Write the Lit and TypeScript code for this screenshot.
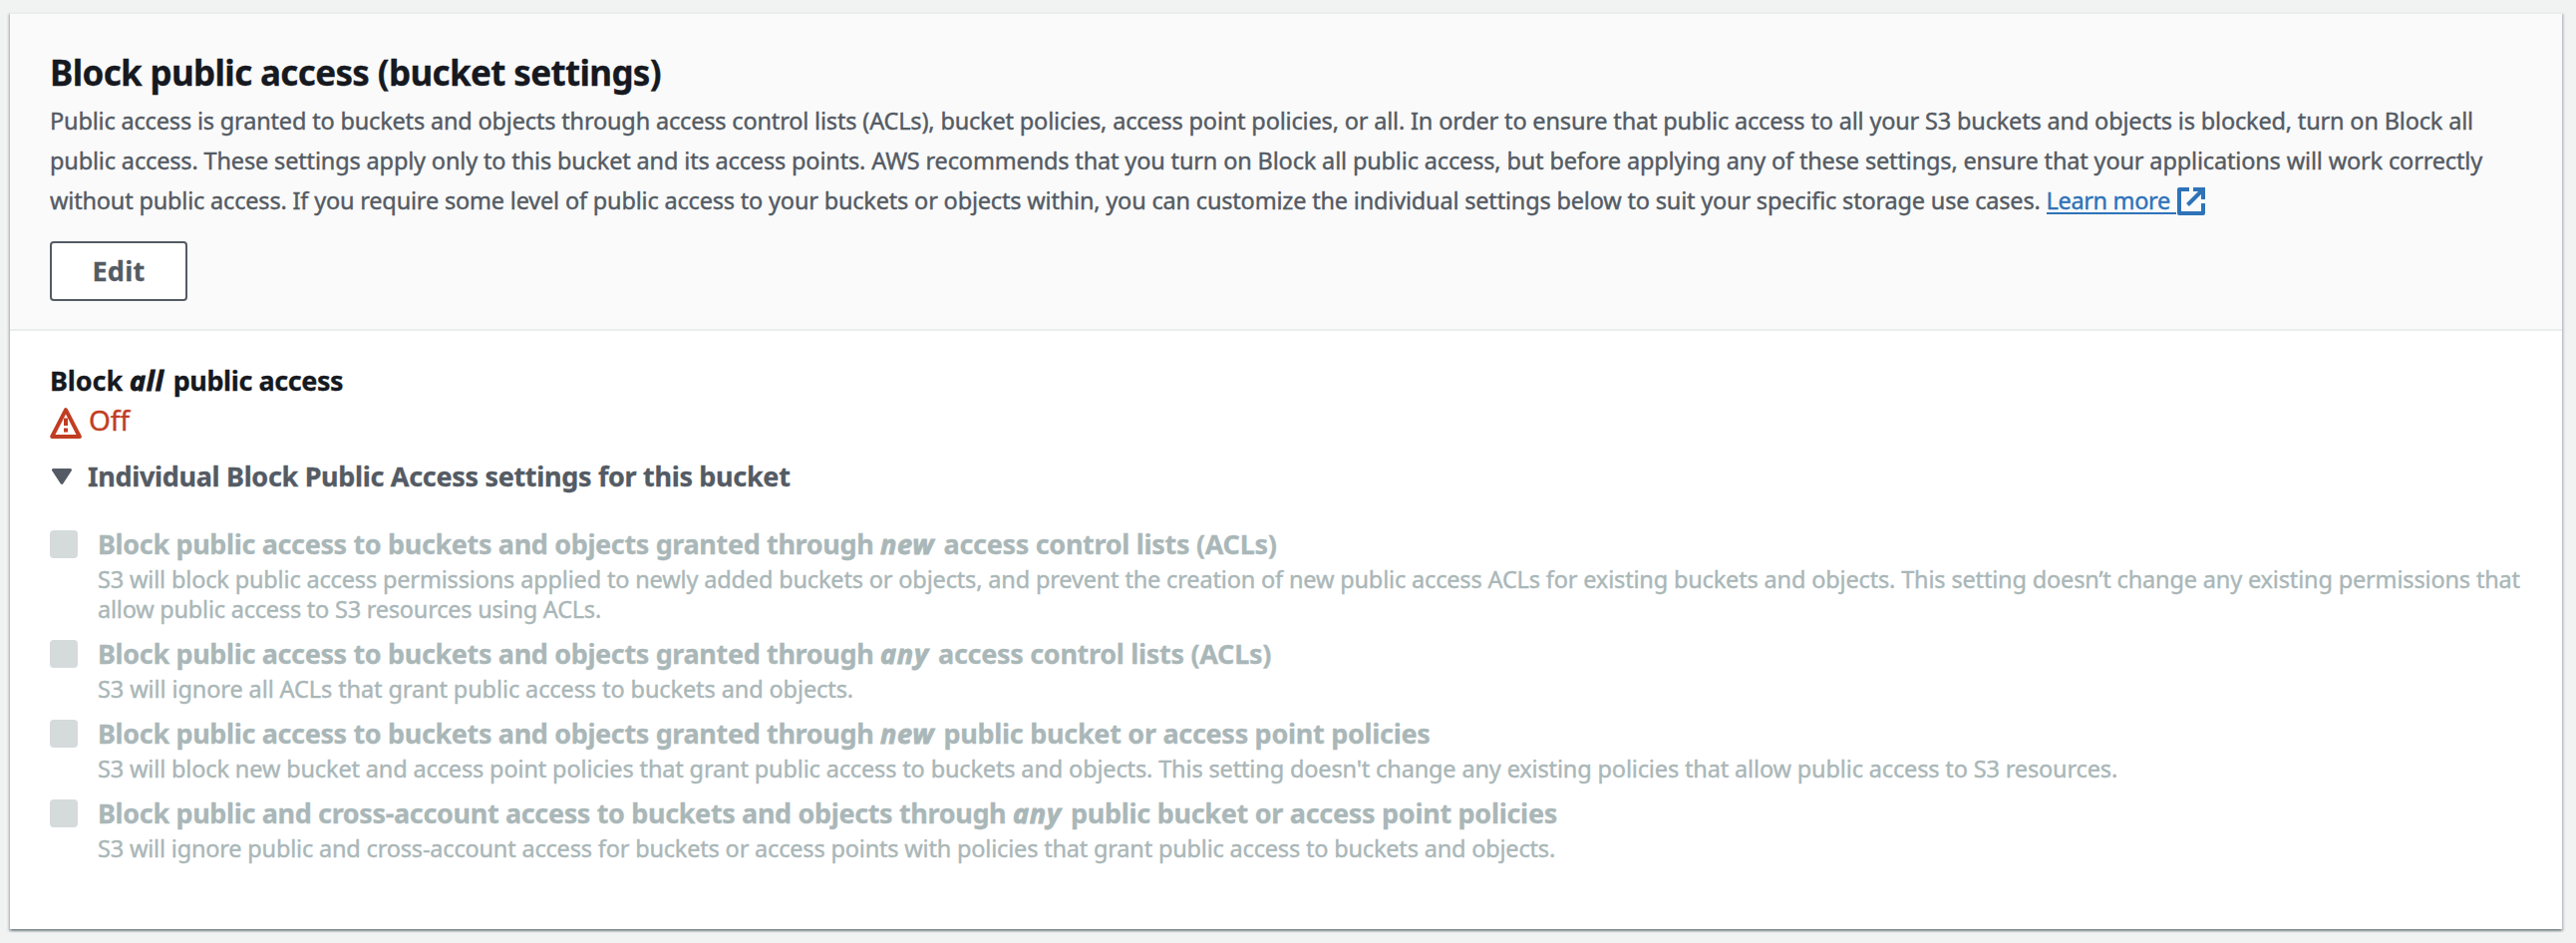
import { LitElement, html, css, svg } from "lit";
import { customElement, property } from "lit/decorators.js";

/** A run of text with its own tracking, in px. */
interface Run {
  text: string;
  track: number;
  em?: boolean;
}

interface Setting {
  label: Run[];
  description: Run[];
}

const run = (r: Run) =>
  r.em
    ? html`<em class="run" style="letter-spacing:${r.track}px">${r.text}</em>`
    : html`<span class="run" style="letter-spacing:${r.track}px">${r.text}</span>`;

const runStyles = css`
  .run {
    white-space: pre;
  }
  em.run {
    margin-right: 1.4px;
    -webkit-text-stroke: 0.9px currentColor;
  }
`;

const INTRO: Run[] = [
  {
    text: "Public access is granted to buckets and objects through access control lists (ACLs), bucket policies, access point policies, or all. In order to ensure that public access to all your S3 buckets and objects is blocked, turn on Block all",
    track: -0.173,
  },
  {
    text: "public access. These settings apply only to this bucket and its access points. AWS recommends that you turn on Block all public access, but before applying any of these settings, ensure that your applications will work correctly",
    track: -0.155,
  },
  {
    text: "without public access. If you require some level of public access to your buckets or objects within, you can customize the individual settings below to suit your specific storage use cases. ",
    track: -0.183,
  },
];

const GRANTED: Run = {
  text: "Block public access to buckets and objects granted through ",
  track: -0.358,
};

const SETTINGS: Setting[] = [
  {
    label: [
      GRANTED,
      { text: "new ", track: 0.75, em: true },
      { text: "access control lists (ACLs)", track: -0.305 },
    ],
    description: [
      {
        text: "S3 will block public access permissions applied to newly added buckets or objects, and prevent the creation of new public access ACLs for existing buckets and objects. This setting doesn’t change any existing permissions that",
        track: -0.161,
      },
      { text: "allow public access to S3 resources using ACLs.", track: -0.219 },
    ],
  },
  {
    label: [
      GRANTED,
      { text: "any ", track: 0.82, em: true },
      { text: "access control lists (ACLs)", track: -0.305 },
    ],
    description: [
      {
        text: "S3 will ignore all ACLs that grant public access to buckets and objects.",
        track: -0.1,
      },
    ],
  },
  {
    label: [
      GRANTED,
      { text: "new ", track: 0.75, em: true },
      { text: "public bucket or access point policies", track: -0.294 },
    ],
    description: [
      {
        text: "S3 will block new bucket and access point policies that grant public access to buckets and objects. This setting doesn't change any existing policies that allow public access to S3 resources.",
        track: -0.145,
      },
    ],
  },
  {
    label: [
      {
        text: "Block public and cross-account access to buckets and objects through ",
        track: -0.356,
      },
      { text: "any ", track: 0.82, em: true },
      { text: "public bucket or access point policies", track: -0.294 },
    ],
    description: [
      {
        text: "S3 will ignore public and cross-account access for buckets or access points with policies that grant public access to buckets and objects.",
        track: -0.182,
      },
    ],
  },
];

const externalIcon = svg`<svg class="external" viewBox="0 0 28 28" width="28" height="28" fill="none" stroke="currentColor" stroke-width="4">
  <path d="M12 2H2V26H26V16" stroke-linejoin="round"/>
  <path d="M16 2H26V12M25.5 2.5L10.5 17.5"/>
</svg>`;

const warningIcon = svg`<svg class="warning" viewBox="0 0 32 32" width="32" height="32" fill="none" stroke="currentColor" stroke-width="4">
  <path d="M16 3.2L29.8 30H2.2Z" stroke-linejoin="round"/>
  <path d="M16 11.5V19M16 21.6V25.6"/>
</svg>`;

const caretIcon = svg`<svg class="caret" viewBox="0 0 22 16" width="22" height="16" fill="currentColor" stroke="currentColor" stroke-width="3" stroke-linejoin="round">
  <path d="M2.5 1.5H19.5L11 14.3Z"/>
</svg>`;

@customElement("setting-row")
class SettingRow extends LitElement {
  @property({ attribute: false }) setting!: Setting;

  static styles = [
    runStyles,
    css`
      :host {
        display: grid;
        grid-template-columns: 28px auto;
        column-gap: 20px;
        justify-content: start;
        color: #aab7b8;
      }
      .box {
        width: 28px;
        height: 28px;
        margin-top: 5px;
        border-radius: 4px;
        background: #d5dbdb;
      }
      .label {
        height: 38px;
        font-size: 27px;
        font-weight: 700;
        line-height: 38px;
        -webkit-text-stroke: 0.3px currentColor;
      }
      .description {
        margin: 1px 0 11px;
        font-size: 23.5px;
        line-height: 30px;
        -webkit-text-stroke: 0.4px currentColor;
      }
      .line {
        display: block;
        height: 30px;
      }
    `,
  ];

  render() {
    return html`
      <span class="box" role="checkbox" aria-checked="false" aria-disabled="true"></span>
      <div>
        <div class="label">${this.setting.label.map(run)}</div>
        <div class="description">
          ${this.setting.description.map((l) => html`<span class="line">${run(l)}</span>`)}
        </div>
      </div>
    `;
  }
}

@customElement("app-root")
class AppRoot extends LitElement {
  static styles = [
    runStyles,
    css`
      :host {
        display: block;
        box-sizing: border-box;
        height: 946px;
        padding: 12px 14px 14px 10px;
        overflow: hidden;
        background: #f1f3f3;
        color: #16191f;
        font-family: "Noto Sans", "Open Sans", sans-serif;
      }
      .panel {
        box-sizing: border-box;
        height: 920px;
        border-top: 2px solid #eaeded;
        background: #fff;
        box-shadow:
          0 2px 2px 0 rgba(0, 28, 36, 0.3),
          2px 2px 2px 0 rgba(0, 28, 36, 0.15),
          -2px 2px 2px 0 rgba(0, 28, 36, 0.15);
      }
      .header {
        box-sizing: border-box;
        height: 318px;
        padding: 37px 40px 0;
        border-bottom: 2px solid #eaeded;
        background: #fafafa;
      }
      .title {
        margin: 0;
        font-size: 35px;
        font-weight: 700;
        line-height: 44px;
        letter-spacing: -0.649px;
        -webkit-text-stroke: 0.3px currentColor;
      }
      .intro {
        margin: 6px 0 21px;
        color: #545b64;
        font-size: 23.5px;
        line-height: 40px;
        -webkit-text-stroke: 0.4px currentColor;
      }
      .line {
        display: flex;
        height: 40px;
      }
      .learn {
        display: flex;
        gap: 1px;
        color: #2e73b8;
        text-decoration: none;
      }
      .learn-text {
        height: 34px;
        margin-top: -2px;
        border-bottom: 2px solid #2e73b8;
        letter-spacing: -0.35px;
        line-height: 44px;
        white-space: pre;
      }
      .external {
        display: block;
        margin-top: 7px;
      }
      .edit {
        box-sizing: border-box;
        display: block;
        width: 138px;
        height: 60px;
        padding: 0;
        border: 2px solid #545b64;
        border-radius: 4px;
        background: #fff;
        color: #545b64;
        font: 700 27px/56px "Noto Sans", sans-serif;
        letter-spacing: 0.3px;
        -webkit-text-stroke: 0.3px currentColor;
      }
      .content {
        padding: 28px 40px 0;
      }
      .heading {
        height: 44px;
        font-size: 27px;
        font-weight: 700;
        line-height: 44px;
        -webkit-text-stroke: 0.3px currentColor;
      }
      .status {
        display: flex;
        gap: 7px;
        height: 34px;
        color: #c13d22;
        font-size: 28px;
        line-height: 34px;
      }
      .off {
        -webkit-text-stroke: 0.4px currentColor;
      }
      .warning {
        margin-top: 4px;
      }
      .toggle {
        display: flex;
        align-items: center;
        gap: 15px;
        height: 40px;
        margin: 20px 0 29px;
        padding-left: 1px;
        color: #545b64;
        font-size: 27px;
        font-weight: 700;
        line-height: 40px;
        letter-spacing: -0.32px;
      }
      .toggle-text {
        -webkit-text-stroke: 0.3px currentColor;
      }
    `,
  ];

  render() {
    return html`
      <section class="panel">
        <header class="header">
          <h2 class="title">Block public access (bucket settings)</h2>
          <div class="intro">${INTRO.map(
            (l, i) =>
              html`<div class="line">${run(l)}${i === INTRO.length - 1
                ? html`<a class="learn"><span class="learn-text">Learn more </span>${externalIcon}</a>`
                : ""}</div>`,
          )}</div>
          <button class="edit">Edit</button>
        </header>
        <div class="content">
          <div class="heading">${[
            { text: "Block ", track: -0.1 },
            { text: "all ", track: 0.8, em: true },
            { text: "public access", track: -0.424 },
          ].map(run)}</div>
          <div class="status">${warningIcon}<span class="off">Off</span></div>
          <div class="toggle">${caretIcon}<span class="toggle-text">Individual Block Public Access settings for this bucket</span></div>
          ${SETTINGS.map((s) => html`<setting-row .setting=${s}></setting-row>`)}
        </div>
      </section>
    `;
  }
}
